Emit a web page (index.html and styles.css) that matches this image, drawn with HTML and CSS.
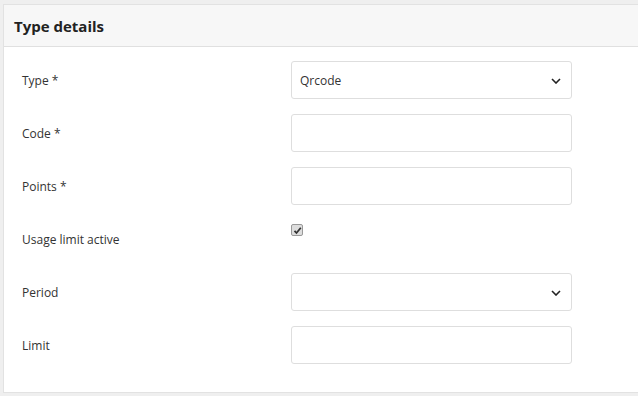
FILE: index.html
```html
<!DOCTYPE html>
<html lang="en">
<head>
  <meta charset="UTF-8" />
  <title>Type details</title>
  <link rel="stylesheet" href="styles.css">
</head>
<body>
  <div class="card">
    <div class="card-header">
      <h2>Type details</h2>
    </div>
    <div class="card-body">
      <!-- Type -->
      <div class="form-row">
        <label class="form-label">Type *</label>
        <div class="form-control select">
          <span>Qrcode</span>
          <svg class="chevron" width="10" height="6" viewBox="0 0 10 6"><path d="M1 1 L5 5 L9 1" fill="none" stroke="#222" stroke-width="1.6"/></svg>
        </div>
      </div>

      <div class="form-row">
        <label class="form-label">Code *</label>
        <div class="form-control"></div>
      </div>

      <div class="form-row">
        <label class="form-label">Points *</label>
        <div class="form-control"></div>
      </div>

      <div class="form-row">
        <label class="form-label">Usage limit active</label>
        <div class="check-cell">
          <span class="checkbox">
            <svg width="9" height="9" viewBox="0 0 9 9"><path d="M1.5 4.8 L3.5 7 L7.8 1.8" fill="none" stroke="#333" stroke-width="1.8"/></svg>
          </span>
        </div>
      </div>

      <div class="form-row">
        <label class="form-label">Period</label>
        <div class="form-control select">
          <span></span>
          <svg class="chevron" width="10" height="6" viewBox="0 0 10 6"><path d="M1 1 L5 5 L9 1" fill="none" stroke="#222" stroke-width="1.6"/></svg>
        </div>
      </div>

      <div class="form-row">
        <label class="form-label">Limit</label>
        <div class="form-control"></div>
      </div>
    </div>
  </div>
</body>
</html>
```
FILE: styles.css
```css
body {
  margin: 0;
  padding: 4px 0 4px 3px;
  background: #efefef;
  font-family: "Open Sans", Arial, sans-serif;
  color: #333;
}

.card {
  background: #fff;
  border: 1px solid #e2e2e2;
  border-right: none;
  height: 389px;
  box-sizing: border-box;
}

.card-header {
  background: #f7f7f7;
  border-bottom: 1px solid #e0e0e0;
  height: 42px;
  box-sizing: border-box;
  padding: 0 10px;
  display: flex;
  align-items: center;
}

.card-header h2 {
  margin: 0;
  font-size: 15px;
  font-weight: 700;
  color: #222;
}

.card-body {
  padding: 14px 0 0 18px;
  display: flex;
  flex-direction: column;
  gap: 15px;
}

.form-row {
  display: grid;
  grid-template-columns: 269px 281px;
  height: 38px;
  align-items: center;
}

.form-label {
  font-size: 12px;
  color: #333;
}

.form-control {
  height: 38px;
  box-sizing: border-box;
  border: 1px solid #dedede;
  border-radius: 3px;
  background: #fff;
}

.select {
  display: flex;
  align-items: center;
  justify-content: space-between;
  padding: 0 10px 0 8px;
  font-size: 12px;
  color: #333;
}

.chevron {
  margin-top: 2px;
}

.check-cell {
  align-self: start;
  padding-top: 4px;
  height: 38px;
  box-sizing: border-box;
}

.checkbox {
  display: flex;
  align-items: center;
  justify-content: center;
  width: 10px;
  height: 10px;
  border: 1px solid #999;
  border-radius: 2px;
  background: #ddd;
}
```
